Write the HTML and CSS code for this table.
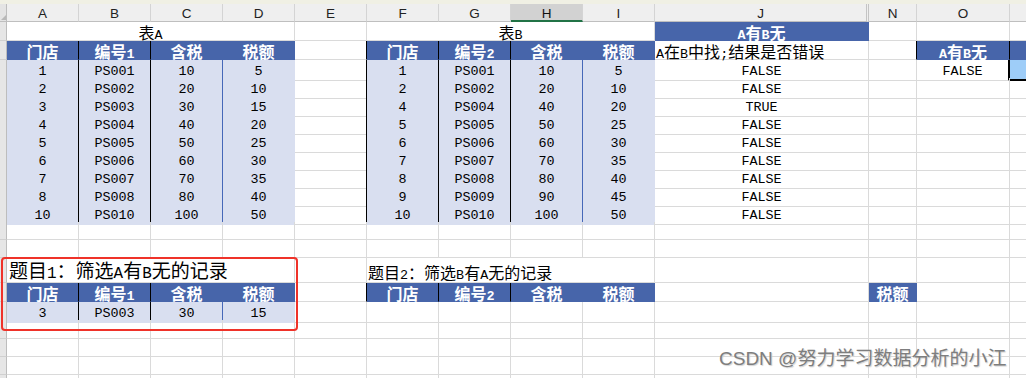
FILE: index.html
```html
<!DOCTYPE html>
<html lang="zh-CN">
<head>
<meta charset="utf-8">
<title>A有B无</title>
<link rel="stylesheet" href="styles.css">
</head>
<body>
<div class="sheet">
  <div class="strip"></div>
  <div class="row colhdr">
    <div class="corner"></div><div>A</div><div>B</div><div>C</div><div>D</div><div>E</div><div>F</div><div>G</div><div class="sel">H</div><div>I</div><div class="dbl">J</div><div>N</div><div>O</div><div></div>
  </div>

  <div class="row r19">
    <div class="rh"></div>
    <div class="m4">表<span class="en">A</span></div>
    <div></div>
    <div class="m4">表<span class="en">B</span></div>
    <div class="hd"><span class="en">A</span>有<span class="en">B</span>无</div>
    <div></div><div></div><div></div>
  </div>

  <div class="row r19">
    <div class="rh"></div>
    <div class="hd bk">门店</div><div class="hd bk">编号<span class="en">1</span></div><div class="hd">含税</div><div class="hd">税额</div>
    <div class="bk"></div>
    <div class="hd bk">门店</div><div class="hd bk">编号<span class="en">2</span></div><div class="hd">含税</div><div class="hd">税额</div>
    <div class="left"><span class="en">A</span>在<span class="en">B</span>中找<span class="en">;</span>结果是否错误</div>
    <div class="bk"></div>
    <div class="hd bk"><span class="en">A</span>有<span class="en">B</span>无</div>
    <div class="hd"></div>
  </div>

  <div class="row">
    <div class="rh"></div>
    <div class="dt bk n">1</div><div class="dt bk n">PS001</div><div class="dt bb n">10</div><div class="dt n">5</div>
    <div class="bk"></div>
    <div class="dt bk n">1</div><div class="dt bk n">PS001</div><div class="dt bb n">10</div><div class="dt n">5</div>
    <div class="n">FALSE</div><div></div><div class="n selo">FALSE</div><div class="selp"></div>
  </div>
  <div class="row">
    <div class="rh"></div>
    <div class="dt bk n">2</div><div class="dt bk n">PS002</div><div class="dt bb n">20</div><div class="dt n">10</div>
    <div class="bk"></div>
    <div class="dt bk n">2</div><div class="dt bk n">PS002</div><div class="dt bb n">20</div><div class="dt n">10</div>
    <div class="n">FALSE</div><div></div><div></div><div></div>
  </div>
  <div class="row">
    <div class="rh"></div>
    <div class="dt bk n">3</div><div class="dt bk n">PS003</div><div class="dt bb n">30</div><div class="dt n">15</div>
    <div class="bk"></div>
    <div class="dt bk n">4</div><div class="dt bk n">PS004</div><div class="dt bb n">40</div><div class="dt n">20</div>
    <div class="n">TRUE</div><div></div><div></div><div></div>
  </div>
  <div class="row">
    <div class="rh"></div>
    <div class="dt bk n">4</div><div class="dt bk n">PS004</div><div class="dt bb n">40</div><div class="dt n">20</div>
    <div class="bk"></div>
    <div class="dt bk n">5</div><div class="dt bk n">PS005</div><div class="dt bb n">50</div><div class="dt n">25</div>
    <div class="n">FALSE</div><div></div><div></div><div></div>
  </div>
  <div class="row">
    <div class="rh"></div>
    <div class="dt bk n">5</div><div class="dt bk n">PS005</div><div class="dt bb n">50</div><div class="dt n">25</div>
    <div class="bk"></div>
    <div class="dt bk n">6</div><div class="dt bk n">PS006</div><div class="dt bb n">60</div><div class="dt n">30</div>
    <div class="n">FALSE</div><div></div><div></div><div></div>
  </div>
  <div class="row">
    <div class="rh"></div>
    <div class="dt bk n">6</div><div class="dt bk n">PS006</div><div class="dt bb n">60</div><div class="dt n">30</div>
    <div class="bk"></div>
    <div class="dt bk n">7</div><div class="dt bk n">PS007</div><div class="dt bb n">70</div><div class="dt n">35</div>
    <div class="n">FALSE</div><div></div><div></div><div></div>
  </div>
  <div class="row">
    <div class="rh"></div>
    <div class="dt bk n">7</div><div class="dt bk n">PS007</div><div class="dt bb n">70</div><div class="dt n">35</div>
    <div class="bk"></div>
    <div class="dt bk n">8</div><div class="dt bk n">PS008</div><div class="dt bb n">80</div><div class="dt n">40</div>
    <div class="n">FALSE</div><div></div><div></div><div></div>
  </div>
  <div class="row">
    <div class="rh"></div>
    <div class="dt bk n">8</div><div class="dt bk n">PS008</div><div class="dt bb n">80</div><div class="dt n">40</div>
    <div class="bk"></div>
    <div class="dt bk n">9</div><div class="dt bk n">PS009</div><div class="dt bb n">90</div><div class="dt n">45</div>
    <div class="n">FALSE</div><div></div><div></div><div></div>
  </div>
  <div class="row">
    <div class="rh"></div>
    <div class="dt bk n last">10</div><div class="dt bk n last">PS010</div><div class="dt bb n last">100</div><div class="dt n last">50</div>
    <div class="bk"></div>
    <div class="dt bk n last">10</div><div class="dt bk n last">PS010</div><div class="dt bb n last">100</div><div class="dt n last">50</div>
    <div class="n">FALSE</div><div></div><div></div><div></div>
  </div>

  <div class="row">
    <div class="rh"></div><div></div><div></div><div></div><div></div><div></div><div></div><div></div><div></div><div></div><div></div><div></div><div></div><div></div>
  </div>
  <div class="row">
    <div class="rh"></div><div></div><div></div><div></div><div></div><div></div><div></div><div></div><div></div><div></div><div></div><div></div><div></div><div></div>
  </div>

  <div class="row r25">
    <div class="rh"></div>
    <div class="m4 left big">题目<span class="en">1</span>：筛选<span class="en">A</span>有<span class="en">B</span>无的记录</div>
    <div></div>
    <div class="m4 left t2">题目<span class="en">2</span>：筛选<span class="en">B</span>有<span class="en">A</span>无的记录</div>
    <div></div><div></div><div></div><div></div>
  </div>

  <div class="row r19">
    <div class="rh"></div>
    <div class="hd bk">门店</div><div class="hd bk">编号<span class="en">1</span></div><div class="hd">含税</div><div class="hd">税额</div>
    <div class="bk"></div>
    <div class="hd bk">门店</div><div class="hd bk">编号<span class="en">2</span></div><div class="hd">含税</div><div class="hd">税额</div>
    <div></div>
    <div class="hd">税额</div>
    <div></div><div></div>
  </div>

  <div class="row">
    <div class="rh"></div>
    <div class="dt bk n last">3</div><div class="dt bk n last">PS003</div><div class="dt bb n last">30</div><div class="dt n last">15</div>
    <div></div><div></div><div></div><div></div><div></div><div></div><div></div><div></div><div></div>
  </div>

  <div class="row r19">
    <div class="rh"></div><div></div><div></div><div></div><div></div><div></div><div></div><div></div><div></div><div></div><div></div><div></div><div></div><div></div>
  </div>
  <div class="row">
    <div class="rh"></div><div></div><div></div><div></div><div></div><div></div><div></div><div></div><div></div><div></div><div></div><div></div><div></div><div></div>
  </div>
  <div class="row">
    <div class="rh"></div><div></div><div></div><div></div><div></div><div></div><div></div><div></div><div></div><div></div><div></div><div></div><div></div><div></div>
  </div>
  <div class="row">
    <div class="rh"></div><div></div><div></div><div></div><div></div><div></div><div></div><div></div><div></div><div></div><div></div><div></div><div></div><div></div>
  </div>

  <div class="redbox"></div>
  <div class="wm">CSDN @努力学习数据分析的小江</div>
</div>
</body>
</html>
```

FILE: styles.css
```css
* {
  box-sizing: border-box;
  margin: 0;
  padding: 0;
}

body {
  margin: 0;
  width: 1026px;
  height: 378px;
  overflow: hidden;
  background: #ffffff;
}

.sheet {
  position: relative;
  width: 1026px;
}

.strip {
  height: 4px;
  background: #f0f0e4;
}

.row {
  display: grid;
  grid-template-columns: 7px repeat(9, 72px) 214px 48px 93px 60px;
  height: 18px;
}

.row > div {
  min-width: 0;
  white-space: nowrap;
  text-align: center;
  color: #000;
  font-family: "Noto Sans CJK SC", sans-serif;
  font-size: 16px;
  line-height: 16px;
  padding-top: 1px;
  border-right: 1px solid #dadada;
  border-bottom: 1px solid #dadada;
}

.r19 { height: 19px; }
.r19 > div { padding-top: 2px; }
.r25 { height: 25px; }

.en {
  font-family: "Liberation Mono", monospace;
  font-size: 0.8375em;
  line-height: 0;
}

.row > .n {
  font-family: "Liberation Mono", monospace;
  font-size: 13.4px;
  padding-top: 4px;
}

.row > .left {
  text-align: left;
  padding-left: 1px;
}

/* column header */
.colhdr > div {
  background: #efefef;
  border-right: 1px solid #d4d4d4;
  border-bottom: 1px solid #bfbfbf;
  font-family: "Liberation Sans", sans-serif;
  font-size: 13.5px;
  line-height: 13px;
  padding-top: 3px;
  color: #222;
}

.colhdr > .corner {
  position: relative;
  background: #e4e4e4;
  border-right: 1px solid #bdbdbd;
}

.corner::after {
  content: "";
  position: absolute;
  right: 0;
  bottom: 1px;
  border-left: 5px solid transparent;
  border-bottom: 5px solid #b8b8b8;
}

.colhdr > .sel {
  background: #d2d2d2;
  border-bottom: 2px solid #217346;
  color: #111;
}

.colhdr > .dbl {
  border-right: 3px double #c4c4c4;
}

/* row header strip */
.row > .rh {
  background: #e6e6e6;
  border-right: 1px solid #bdbdbd;
  border-bottom: 1px solid #d0d0d0;
}

/* merged */
.m4 {
  grid-column: span 4;
}

/* styled cells */
.row > .hd {
  background: #4765aa;
  color: #ffffff;
  font-weight: bold;
  border-right-color: #4765aa;
  border-bottom-color: #4765aa;
}

.row > .dt {
  background: #d9dff0;
  border-right-color: #d9dff0;
  border-bottom-color: #000000;
}

.row > .last {
  border-bottom-color: #d9dff0;
}

.row > .bk {
  border-right-color: #000000;
}

.row > .bb {
  border-right-color: #4668b8;
}

.row > .selo {
  border-right: 2px solid #000000;
}

.row > .selp {
  background: #9ecdf8;
  border-bottom: 2px solid #000000;
}

/* titles */
.row > .big {
  font-size: 19px;
  line-height: 19px;
  padding-top: 2px;
  padding-left: 2px;
}

.row > .t2 {
  padding-top: 6px;
}

/* overlays */
.redbox {
  position: absolute;
  left: 1px;
  top: 257px;
  width: 297px;
  height: 74px;
  border: 2px solid #ef3229;
  border-radius: 4px;
}

.wm {
  position: absolute;
  left: 719px;
  top: 349px;
  font-family: "Liberation Sans", "Noto Sans CJK SC", sans-serif;
  font-size: 19px;
  line-height: 19px;
  color: #7e7e7e;
  text-shadow: 1px 1px 1px #d2d2d2;
  white-space: nowrap;
}
```
